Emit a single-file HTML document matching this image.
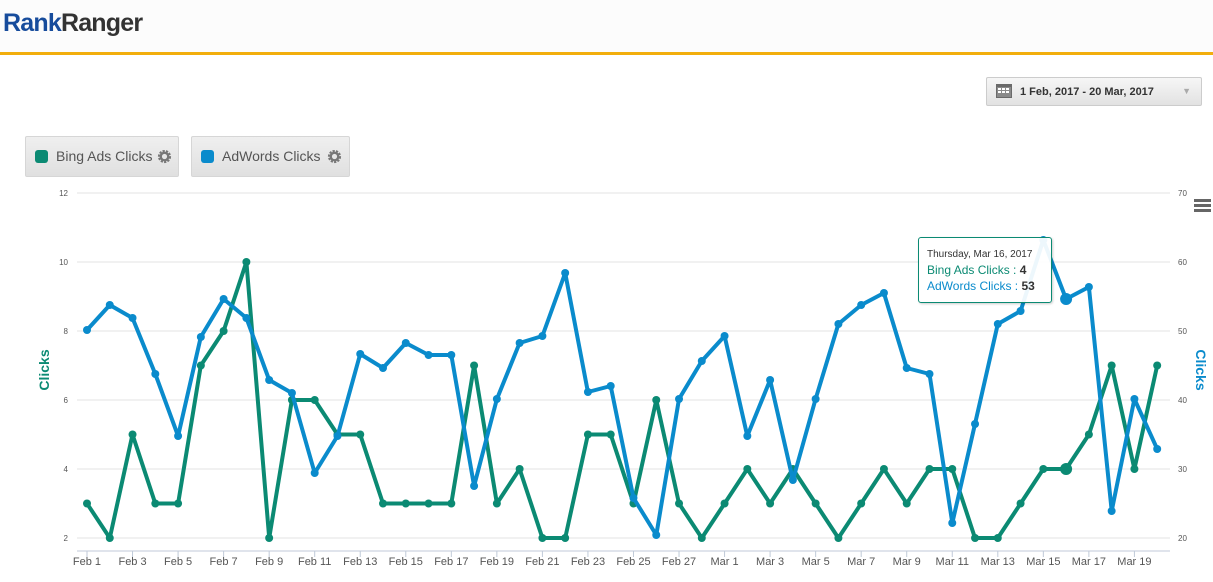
<!DOCTYPE html>
<html><head><meta charset="utf-8"><style>
body{margin:0;width:1213px;height:582px;overflow:hidden;background:#fff;font-family:"Liberation Sans",sans-serif;position:relative}
.hdr{position:absolute;left:0;top:0;width:1213px;height:52px;background:#fcfcfc;border-bottom:3px solid #f2ae0d}
.logo{position:absolute;left:3px;top:9px;font-size:25px;font-weight:bold;letter-spacing:-0.8px}
.dp{position:absolute;left:986px;top:77px;width:214px;height:27px;border:1px solid #ccc;border-radius:2px;background:linear-gradient(#f6f6f6,#e2e2e2);font-size:11px;font-weight:bold;color:#333}
.lg{position:absolute;top:136px;height:39px;border:1px solid #d6d6d6;border-radius:2px;background:linear-gradient(#efefef,#e0e0e0);font-size:14px;color:#555}
.sw{position:absolute;left:9px;top:13px;width:13px;height:13px;border-radius:3px}
.gear{position:absolute;top:12px;width:15px;height:15px}
.tt{position:absolute;left:918px;top:237px;width:132px;height:64px;border:1px solid #0b8a73;border-radius:3px;background:rgba(255,255,255,.93);font-size:12px;box-shadow:1px 1px 2px rgba(0,0,0,.2)}
</style></head><body>
<div class="hdr"><div class="logo"><span style="color:#174c9c">Rank</span><span style="color:#333">Ranger</span></div></div>
<div class="dp">
<svg style="position:absolute;left:9px;top:6px" width="16" height="14"><rect x="0" y="0" width="16" height="14" fill="#6a6a6a"/><rect x="1" y="3" width="14" height="10" fill="#8a8a8a"/><g fill="#fff"><rect x="2" y="4" width="3" height="2"/><rect x="6" y="4" width="3" height="2"/><rect x="10" y="4" width="3" height="2"/><rect x="2" y="7" width="3" height="2"/><rect x="6" y="7" width="3" height="2"/><rect x="10" y="7" width="3" height="2"/></g></svg>
<span style="position:absolute;left:33px;top:8px">1 Feb, 2017 - 20 Mar, 2017</span>
<span style="position:absolute;right:10px;top:8px;color:#aaa;font-size:9px">▼</span></div>
<div class="lg" style="left:25px;width:152px"><div class="sw" style="background:#0b8a73"></div><span style="position:absolute;left:30px;top:11px">Bing Ads Clicks</span>
<svg class="gear" style="left:131px" viewBox="0 0 16 16"><circle cx="8" cy="8" r="5.5" fill="none" stroke="#777" stroke-width="3" stroke-dasharray="2.2 1.2"/><circle cx="8" cy="8" r="4" fill="none" stroke="#777" stroke-width="2.5"/></svg></div>
<div class="lg" style="left:191px;width:157px"><div class="sw" style="background:#0a8bcc"></div><span style="position:absolute;left:30px;top:11px">AdWords Clicks</span>
<svg class="gear" style="left:135px" viewBox="0 0 16 16"><circle cx="8" cy="8" r="5.5" fill="none" stroke="#777" stroke-width="3" stroke-dasharray="2.2 1.2"/><circle cx="8" cy="8" r="4" fill="none" stroke="#777" stroke-width="2.5"/></svg></div>
<svg id="c" style="position:absolute;left:0;top:0" width="1213" height="582"></svg>
<div class="tt"><div style="position:absolute;left:8px;top:11px;font-size:10px;color:#333">Thursday, Mar 16, 2017</div>
<div style="position:absolute;left:8px;top:25px;color:#0b8a73">Bing Ads Clicks : <b style="color:#333">4</b></div>
<div style="position:absolute;left:8px;top:41px;color:#0a8bcc">AdWords Clicks : <b style="color:#333">53</b></div></div>
<script>
var s='',L=[12,10,8,6,4,2],R=[70,60,50,40,30,20];
for(var i=0;i<6;i++){var y=193+i*69;s+='<line x1="77" x2="1170" y1="'+y+'" y2="'+y+'" stroke="#e3e3e3"/>';
s+='<text x="68" y="'+(y+3)+'" font-size="8" fill="#555" text-anchor="end">'+L[i]+'</text><text x="1178" y="'+(y+3)+'" font-size="8" fill="#555">'+R[i]+'</text>';}
s+='<line x1="77" x2="1170" y1="551" y2="551" stroke="#c0cad8"/>';
var X=function(i){return 87+i*22.77};
var lab=['Feb 1','Feb 3','Feb 5','Feb 7','Feb 9','Feb 11','Feb 13','Feb 15','Feb 17','Feb 19','Feb 21','Feb 23','Feb 25','Feb 27','Mar 1','Mar 3','Mar 5','Mar 7','Mar 9','Mar 11','Mar 13','Mar 15','Mar 17','Mar 19'];
for(var i=0;i<24;i++){var x=X(i*2);s+='<line x1="'+x+'" x2="'+x+'" y1="551" y2="557" stroke="#c0cad8"/><text x="'+x+'" y="565" font-size="11" fill="#555" text-anchor="middle">'+lab[i]+'</text>';}
var b=[3,2,5,3,3,7,8,10,2,6,6,5,5,3,3,3,3,7,3,4,2,2,5,5,3,6,3,2,3,4,3,4,3,2,3,4,3,4,4,2,2,3,4,4,5,7,4,7];
var a=[330,305,318,374,436,337,299,318,380,393,473,436,354,368,343,355,355,486,399,343,336,273,392,386,498,535,399,361,336,436,380,480,399,324,305,293,368,374,523,424,324,311,240,299,287,511,399,449];
function ser(ys,c){var p='',d='';for(var i=0;i<ys.length;i++){p+=(i?'L':'M')+X(i).toFixed(1)+' '+ys[i]+' ';d+='<circle cx="'+X(i)+'" cy="'+ys[i]+'" r="4" fill="'+c+'"/>';}
return '<path d="'+p+'" fill="none" stroke="'+c+'" stroke-width="4" stroke-linejoin="round"/>'+d;}
s+=ser(b.map(function(v){return 193+(12-v)*34.5}),'#0b8a73');
s+=ser(a,'#0a8bcc');
s+='<circle cx="'+X(43)+'" cy="469" r="6" fill="#0b8a73"/><circle cx="'+X(43)+'" cy="299" r="6" fill="#0a8bcc"/>';
s+='<text transform="translate(49,370) rotate(-90)" font-size="14" font-weight="bold" fill="#0b8a73" text-anchor="middle">Clicks</text>';
s+='<text transform="translate(1196,370) rotate(90)" font-size="14" font-weight="bold" fill="#0a8bcc" text-anchor="middle">Clicks</text>';
s+='<g fill="#666"><rect x="1194" y="199" width="17" height="3"/><rect x="1194" y="204" width="17" height="3"/><rect x="1194" y="209" width="17" height="3"/></g>';
document.getElementById('c').innerHTML=s;
</script>
</body></html>
